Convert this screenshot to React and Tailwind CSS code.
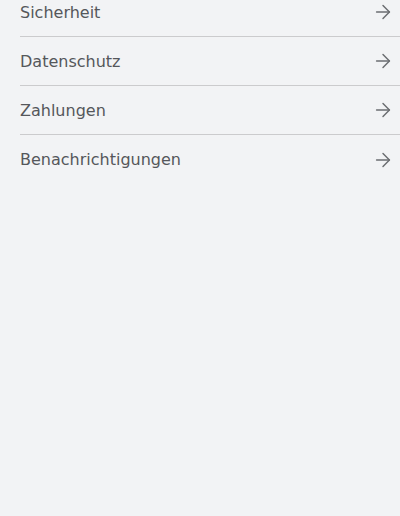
import React from "react";
import { ArrowRight } from "lucide-react";

const items = ["Sicherheit", "Datenschutz", "Zahlungen", "Benachrichtigungen"];

export default function App() {
  return (
    <div className="min-h-[516px] w-full bg-[#f2f3f5] overflow-hidden" style={{ fontFamily: '"DejaVu Sans", sans-serif' }}>
      <ul className="-mt-[12px] pl-5">
        {items.map((label, i) => (
          <li
            key={label}
            className={
              "flex h-[49px] items-center justify-between pr-[6px] " +
              (i < items.length - 1 ? "border-b border-[#cbcbcd]" : "")
            }
          >
            <span className="pt-[1px] text-[16px] text-[#55575b]">{label}</span>
            <ArrowRight size={22} strokeWidth={1.6} className="text-[#6b6d71]" />
          </li>
        ))}
      </ul>
    </div>
  );
}
